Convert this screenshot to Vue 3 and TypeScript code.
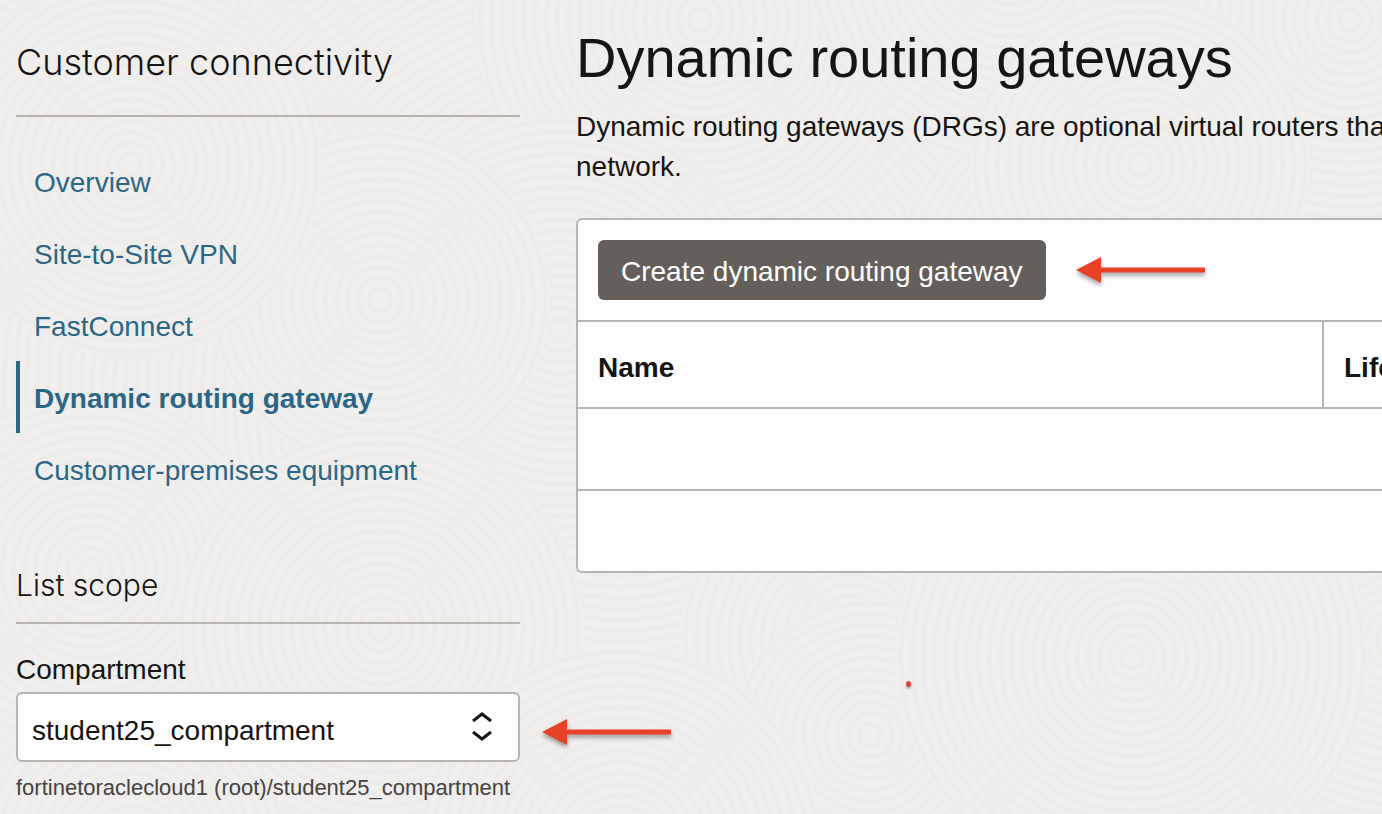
<script setup lang="ts">
import { ref } from 'vue'

interface Ripple {
  x: number
  y: number
  rings: number
}

const links: string[] = [
  'Overview',
  'Site-to-Site VPN',
  'FastConnect',
  'Dynamic routing gateway',
  'Customer-premises equipment',
]
const active = ref('Dynamic routing gateway')
const compartment = ref('student25_compartment')

const RING_GAP = 11
const ripples: Ripple[] = [
  { x: 620, y: 400, rings: 70 },
  { x: 1300, y: 420, rings: 40 },
  { x: 40, y: -60, rings: 20 },
  { x: 700, y: 20, rings: 20 },
  { x: 1010, y: -40, rings: 18 },
  { x: 1350, y: 20, rings: 18 },
  { x: 560, y: 330, rings: 19 },
  { x: 380, y: 300, rings: 15 },
  { x: 130, y: 165, rings: 17 },
  { x: 1140, y: 165, rings: 15 },
  { x: 90, y: 570, rings: 16 },
  { x: 1400, y: 640, rings: 16 },
  { x: 850, y: 640, rings: 15 },
  { x: 380, y: 630, rings: 18 },
  { x: 870, y: 735, rings: 12 },
  { x: 1132, y: 657, rings: 21 },
  { x: 620, y: 850, rings: 18 },
  { x: 130, y: 850, rings: 14 },
]
</script>

<template>
  <div class="page">
    <svg class="backdrop" viewBox="0 0 1382 814" preserveAspectRatio="xMidYMid slice" aria-hidden="true">
      <g v-for="(r, i) in ripples" :key="i">
        <circle class="disc" :cx="r.x" :cy="r.y" :r="r.rings * RING_GAP + 5" />
        <circle v-for="n in r.rings" :key="n" class="ring" :cx="r.x" :cy="r.y" :r="n * RING_GAP" />
      </g>
    </svg>

    <aside class="sidebar">
      <h2 class="section-title">Customer connectivity</h2>
      <nav class="nav">
        <a
          v-for="link in links"
          :key="link"
          href="#"
          class="nav-link"
          :class="{ active: link === active }"
          @click.prevent="active = link"
        >{{ link }}</a>
      </nav>

      <h3 class="scope-title">List scope</h3>
      <label class="field-label" for="compartment">Compartment</label>
      <div class="field">
        <select id="compartment" v-model="compartment" class="select">
          <option>student25_compartment</option>
        </select>
        <svg class="chevrons" width="20" height="30" viewBox="0 0 20 30" aria-hidden="true">
          <path d="M1 10 L10 3 L19 10 M1 21 L10 28 L19 21" />
        </svg>
        <svg class="arrow field-arrow" width="129" height="26" viewBox="0 0 129 26" aria-hidden="true">
          <path d="M0 13 L25 0 V10.500 H129 V15.500 H25 V26 Z" />
        </svg>
      </div>
      <p class="hint">fortinetoraclecloud1 (root)/student25_compartment</p>
    </aside>

    <main class="content">
      <h1 class="title">Dynamic routing gateways</h1>
      <p class="intro">Dynamic routing gateways (DRGs) are optional virtual routers that<br />network.</p>

      <section class="panel">
        <div class="toolbar">
          <button type="button" class="create">Create dynamic routing gateway</button>
          <svg class="arrow" width="129" height="26" viewBox="0 0 129 26" aria-hidden="true">
            <path d="M0 13 L25 0 V10.500 H129 V15.500 H25 V26 Z" />
          </svg>
        </div>
        <table class="table">
          <thead>
            <tr>
              <th class="name" scope="col">Name</th>
              <th scope="col">Life</th>
            </tr>
          </thead>
          <tbody>
            <tr><td colspan="2"></td></tr>
            <tr><td colspan="2"></td></tr>
          </tbody>
        </table>
      </section>
      <span class="dot" aria-hidden="true"></span>
    </main>
  </div>
</template>

<style>
body {
  margin: 0;
  background: #f0efed;
}
</style>

<style scoped>
.page {
  position: relative;
  display: grid;
  grid-template-columns: 504px minmax(0, 1fr);
  column-gap: 56px;
  min-height: 100vh;
  padding-left: 16px;
  box-sizing: border-box;
  overflow: hidden;
  background: #f0efed;
  color: #161513;
  font-family: "Liberation Sans", Arial, sans-serif;
  font-size: 28px;
}
.backdrop {
  position: absolute;
  inset: 0;
  width: 100%;
  height: 100%;
}
.disc {
  fill: #f0efed;
}
.ring {
  fill: none;
  stroke: #edecea;
  stroke-width: 4;
}
.sidebar,
.content {
  position: relative;
}
.sidebar {
  padding-top: 38px;
}
.section-title,
.scope-title {
  margin: 0;
  border-bottom: 2px solid #b8b4b1;
  font-family: Inter, "Liberation Sans", sans-serif;
  font-weight: 300;
}
.section-title {
  padding-bottom: 29px;
  font-size: 36px;
  line-height: 48px;
}
.nav {
  display: flex;
  flex-direction: column;
  margin: 28px 0 60px;
}
.nav-link {
  padding-left: 14px;
  border-left: 4px solid transparent;
  color: #2c6685;
  line-height: 72px;
  text-decoration: none;
  padding-top: 2px;
  height: 70px;
}
.nav-link.active {
  border-left-color: #2c6685;
  font-weight: 700;
}
.scope-title {
  padding-bottom: 17px;
  font-size: 30px;
  line-height: 40px;
}
.field-label {
  display: block;
  margin-top: 28px;
  line-height: 36px;
}
.field {
  position: relative;
  margin-top: 4px;
}
.select {
  display: block;
  width: 100%;
  height: 70px;
  padding: 6px 60px 0 14px;
  border: 2px solid #b8b4b1;
  border-radius: 6px;
  background: #fdfdfd;
  color: #161513;
  font: inherit;
  appearance: none;
}
.chevrons {
  position: absolute;
  top: 19px;
  right: 28px;
  fill: none;
  stroke: #161513;
  stroke-width: 3;
  pointer-events: none;
}
.arrow {
  fill: #e94128;
  overflow: visible;
  filter: drop-shadow(0 3px 2px rgba(0, 0, 0, 0.35));
}
.field-arrow {
  position: absolute;
  top: 27px;
  left: calc(100% + 22px);
}
.hint {
  margin: 12px 0 0;
  color: #45423f;
  font-size: 22px;
  line-height: 28px;
  white-space: nowrap;
}
.content {
  padding-top: 26px;
}
.title {
  margin: 0;
  font-size: 56px;
  font-weight: 400;
  line-height: 64px;
  white-space: nowrap;
}
.intro {
  margin: 17px 0 31px;
  line-height: 40px;
  white-space: nowrap;
}
.panel {
  border: 2px solid #b8b4b1;
  border-right: 0;
  border-radius: 6px 0 0 6px;
  background: #fdfdfd;
}
.toolbar {
  display: flex;
  align-items: center;
  gap: 30px;
  padding: 20px;
}
.create {
  height: 60px;
  padding: 4px 23px 0;
  border: 0;
  border-radius: 6px;
  background: #655f5b;
  color: #fff;
  font: inherit;
  white-space: nowrap;
}
.table {
  width: 100%;
  border-spacing: 0;
  table-layout: fixed;
}
.table th {
  height: 78px;
  padding: 7px 0 0 20px;
  border-top: 2px solid #b8b4b1;
  overflow: hidden;
  text-align: left;
  white-space: nowrap;
}
.table .name {
  width: 724px;
  border-right: 2px solid #b8b4b1;
}
.table td {
  height: 80px;
  padding: 0;
  border-top: 2px solid #b8b4b1;
}
.dot {
  display: block;
  width: 5px;
  height: 6px;
  margin: 108px 0 0 330px;
  border-radius: 50%;
  background: #dc4630;
  box-shadow: 0 2px 2px rgba(0, 0, 0, 0.25);
}
</style>
